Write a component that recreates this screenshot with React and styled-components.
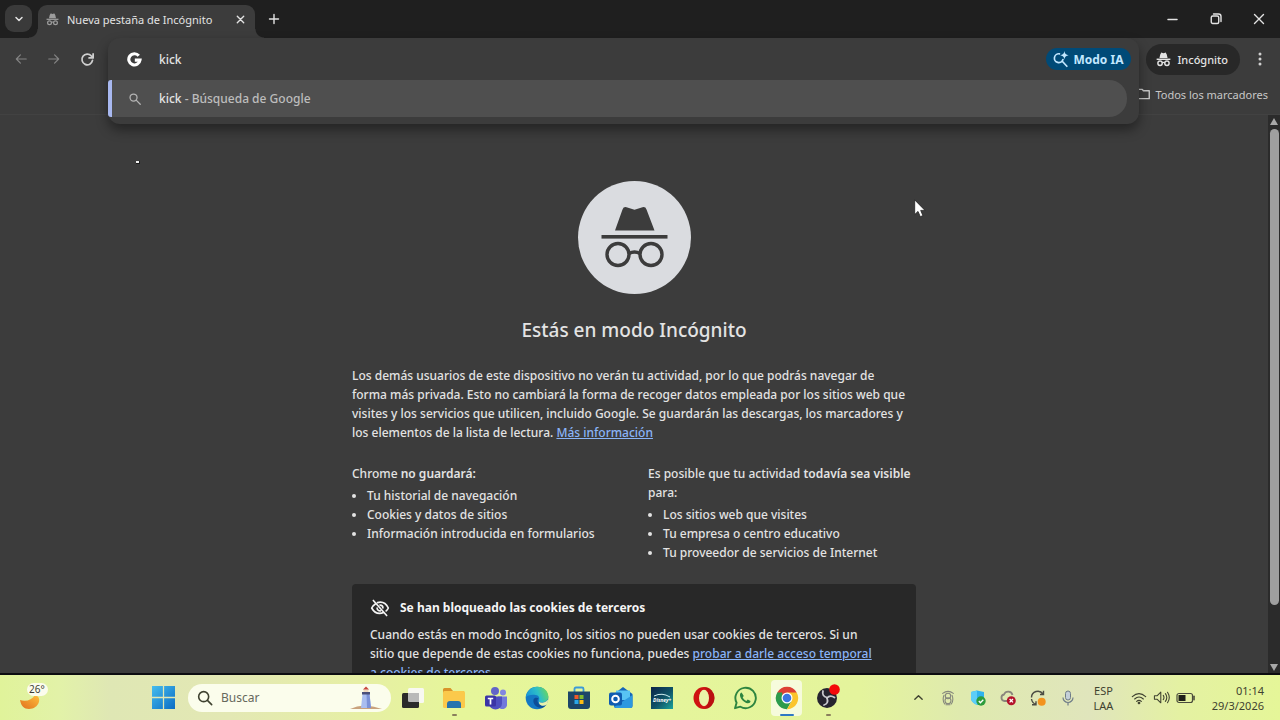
import React from "react";
import styled, { createGlobalStyle } from "styled-components";

const GlobalStyle = createGlobalStyle`
  *, *::before, *::after { box-sizing: border-box; }
  body {
    margin: 0;
    background: #3c3c3c;
    color: #e3e3e3;
    font-family: "Noto Sans", "Open Sans", sans-serif;
    font-size: 12px;
    font-weight: 500;
  }
  button, input {
    font: inherit;
    color: inherit;
    background: none;
    border: 0;
    padding: 0;
    outline: 0;
  }
  button { display: flex; align-items: center; justify-content: center; }
  h1, h2, p, ul { margin: 0; }
  strong { font-weight: 600; }
  svg { display: block; flex: none; }
`;

const Screen = styled.div`
  height: 100vh;
  display: flex;
  flex-direction: column;
  overflow: hidden;
`;

/* ---------- tab strip ---------- */

const TabStrip = styled.header`
  display: flex;
  align-items: flex-start;
  height: 38px;
  padding: 5px 0 0 5px;
  background: #1f1f1f;
`;

const TabSearch = styled.button`
  width: 27px;
  height: 27px;
  border-radius: 9px;
  background: #3a3a3a;
`;

const Tab = styled.div`
  position: relative;
  display: flex;
  align-items: center;
  gap: 8px;
  width: 217px;
  height: 33px;
  margin-left: 6px;
  padding: 0 7px 4px 8px;
  border-radius: 9px 9px 0 0;
  background: #3c3c3c;
  font-size: 11px;
  font-weight: 400;

  &::before, &::after {
    content: "";
    position: absolute;
    bottom: 0;
    width: 9px;
    height: 9px;
  }
  &::before { left: -9px; background: radial-gradient(circle at 0 0, #1f1f1f 8px, #3c3c3c 9px); }
  &::after { right: -9px; background: radial-gradient(circle at 100% 0, #1f1f1f 8px, #3c3c3c 9px); }
`;

const TabTitle = styled.span`
  flex: 1;
  white-space: nowrap;
`;

const IconButton = styled.button`
  width: ${(p) => p.$w || 16}px;
  height: ${(p) => p.$h || 16}px;
  color: ${(p) => p.$color || "#e3e3e3"};
`;

const NewTab = styled(IconButton)`
  margin: 1px 0 0 7px;
`;

const WindowControls = styled.div`
  display: flex;
  margin-left: auto;
`;

/* ---------- toolbar ---------- */

const Toolbar = styled.nav`
  display: flex;
  align-items: center;
  height: 42px;
  padding-right: 12px;
`;

const NavButtons = styled.div`
  display: flex;
  width: 108px;
  padding-left: 4px;
`;

const Omnibox = styled.form`
  position: relative;
  flex: 1;
  align-self: stretch;
  z-index: 2;
`;

const Popup = styled.div`
  position: absolute;
  inset: 0 0 auto 0;
  padding-bottom: 7px;
  border-radius: 12px;
  background: #3c3c3c;
  box-shadow: 0 6px 12px rgba(0, 0, 0, 0.4);
`;

const QueryRow = styled.div`
  display: flex;
  align-items: center;
  gap: 17px;
  height: 42px;
  padding: 0 8px 0 19px;
`;

const QueryInput = styled.input`
  flex: 1;
  min-width: 0;
`;

const AiButton = styled.button`
  gap: 4px;
  height: 22px;
  padding: 0 8px 0 6px;
  border-radius: 11px;
  background: #004a77;
  color: #c2e7ff;
  font-weight: 700;
`;

const Suggestion = styled.button`
  width: calc(100% - 12px);
  justify-content: flex-start;
  gap: 17px;
  height: 37px;
  padding-left: 16px;
  border-left: 4px solid #a8b8f0;
  border-radius: 3px 18px 18px 3px;
  background: #4f4f4f;
`;

const Muted = styled.span`
  color: #bdbdbd;
`;

const IncognitoChip = styled.button`
  gap: 6px;
  height: 31px;
  margin-left: 7px;
  padding: 0 12px 0 10px;
  border-radius: 16px;
  background: #282828;
  font-size: 11px;
`;

const MenuButton = styled(IconButton)`
  margin-left: 12px;
`;

const BookmarksBar = styled.div`
  display: flex;
  justify-content: flex-end;
  height: 35px;
  padding: 4px 12px 0 0;
  border-bottom: 1px solid #424242;
`;

const BookmarksButton = styled.button`
  gap: 4px;
  height: 20px;
  font-size: 11px;
  font-weight: 400;
  color: #c7c7c7;
`;

/* ---------- page ---------- */

const Viewport = styled.div`
  flex: 1;
  min-height: 0;
  display: flex;
  border-bottom: 2px solid #0c0c10;
`;

const Page = styled.main`
  position: relative;
  flex: 1;
  overflow: hidden;
  padding-top: 66px;
`;

const Article = styled.article`
  display: flex;
  flex-direction: column;
  width: 564px;
  margin: 0 auto;
  line-height: 19px;
`;

const Badge = styled.div`
  align-self: center;
  width: 113px;
  height: 113px;
  border-radius: 50%;
  background: #dadce0;
`;

const Title = styled.h1`
  margin: 23px 0 22px;
  font-size: 19px;
  line-height: 27px;
  font-weight: 500;
  text-align: center;
`;

const Link = styled.a`
  color: #8ab4f8;
  text-decoration: underline;
`;

const Columns = styled.div`
  display: grid;
  grid-template-columns: 1fr 1fr;
  column-gap: 28px;
  margin-top: 22px;
`;

const List = styled.ul`
  margin-top: 3px;
  padding-left: 15px;
`;

const CookieCard = styled.section`
  margin-top: 22px;
  padding: 14px 38px 14px 18px;
  border-radius: 4px;
  background: #282828;
`;

const CardTitle = styled.h2`
  display: flex;
  align-items: center;
  gap: 10px;
  margin-bottom: 7px;
  font-size: 12px;
  line-height: 20px;
  font-weight: 700;
  color: #f5f5f5;
`;

const Scrollbar = styled.div`
  display: flex;
  flex-direction: column;
  align-items: center;
  justify-content: space-between;
  width: 12px;
  padding: 3px 0 2px;
  background: #2b2b2b;
`;

const Thumb = styled.div`
  flex: 1;
  width: 9px;
  margin: 4px 0 59px;
  border-radius: 5px;
  background: #9f9f9f;
`;

const Pointer = styled.svg`
  position: absolute;
  left: 914px;
  top: 84px;
`;

const Speck = styled.div`
  position: absolute;
  left: 136px;
  top: 46px;
  width: 4px;
  height: 3px;
  background: #f0f0f0;
  border: solid #1c1c1c;
  border-width: 0 1px 1px 0;
`;

/* ---------- taskbar ---------- */

const Taskbar = styled.footer`
  display: flex;
  align-items: center;
  height: 45px;
  padding: 0 16px 0 17px;
  background: linear-gradient(90deg, #e0f39a 0, #e2f2a8 60px, #dfe7b4 110px, #e3e8b4 230px, #e6efa4 360px, #e6f69a 460px, #e4f49c 860px, #dfeaae 960px, #e0e5bc 1090px, #e4f1a2 1180px, #e5f698 1280px);
  color: #3f4230;
  font-size: 11px;
  font-weight: 400;
`;

const Weather = styled.button`
  width: 36px;
  height: 36px;
`;

const StartButton = styled.button`
  width: 40px;
  height: 40px;
  margin: 0 5px 0 90px;
`;

const SearchBox = styled.label`
  display: flex;
  align-items: center;
  gap: 8px;
  width: 203px;
  height: 28px;
  padding: 0 8px 0 9px;
  border-radius: 14px;
  background: #fbfdec;
  font-size: 12px;
`;

const SearchInput = styled.input`
  flex: 1;
  min-width: 0;
  &::placeholder { color: #66685c; opacity: 1; }
`;

const Apps = styled.div`
  display: flex;
  width: 457px;
  margin-left: 1px;
`;

const AppButton = styled.button`
  position: relative;
  flex: 1;
  height: 36px;

  &::before {
    content: "";
    position: absolute;
    inset: 0 5px;
    border-radius: 4px;
    background: ${(p) => (p.$active ? "#f6fbdc" : "transparent")};
  }
  &::after {
    content: "";
    position: absolute;
    bottom: 0;
    width: ${(p) => (p.$active ? 14 : 5)}px;
    height: 2px;
    border-radius: 1px;
    background: ${(p) => (p.$active ? "#2f78c4" : p.$open ? "#8a7f5c" : "transparent")};
  }
  svg { position: relative; }
`;

const Tray = styled.div`
  display: flex;
  align-items: center;
  margin-left: auto;
`;

const TrayButton = styled.button`
  width: 30px;
  height: 36px;
`;

const Language = styled.button`
  width: 41px;
  line-height: 15px;
  white-space: pre-line;
`;

const Status = styled.button`
  gap: 6px;
  height: 36px;
  margin-left: 7px;
`;

const Clock = styled.button`
  display: block;
  width: 68px;
  line-height: 15px;
  text-align: right;
  white-space: pre-line;
`;

/* ---------- drawings ---------- */

const Stroke = ({ size = 16, w = 2, box = 24, children }) => (
  <svg width={size} height={size} viewBox={`0 0 ${box} ${box}`} fill="none" stroke="currentColor" strokeWidth={w} strokeLinecap="round" strokeLinejoin="round" aria-hidden="true">
    {children}
  </svg>
);

const MiniIncognito = ({ size = 14, color = "#e3e3e3" }) => (
  <svg width={size} height={size} viewBox="0 0 24 24" fill={color} aria-hidden="true">
    <path d="M17.1 3.6 15.8 1.5c-.3-.5-.8-.7-1.3-.5L12 1.8 9.500 1c-.5-.2-1 0-1.300.5L6.900 3.600 5.500 9.500h13z" />
    <path d="M1 10.500h22v2.300H1z" />
    <circle cx="6.500" cy="18" r="3.500" fill="none" stroke={color} strokeWidth="2.300" />
    <circle cx="17.500" cy="18" r="3.500" fill="none" stroke={color} strokeWidth="2.300" />
    <path d="M9.500 17.500q2.500-1.800 5 0" fill="none" stroke={color} strokeWidth="2" />
  </svg>
);

const IncognitoMark = () => (
  <svg width="113" height="113" viewBox="0 0 113 113" aria-hidden="true">
    <path d="M37 49.500 44.500 28.500Q45.500 25.500 48.500 26.200L56.500 28.800 64.500 26.200Q67.500 25.500 68.500 28.500L76.500 49.500Z" fill="#3c3c3c" />
    <rect x="23.500" y="54" width="66" height="3.600" fill="#3c3c3c" />
    <g fill="none" stroke="#3c3c3c" strokeWidth="3.400">
      <circle cx="40" cy="73.500" r="11" />
      <circle cx="73" cy="73.500" r="11" />
      <path d="M51 72.500q5.500-3 11 0" />
    </g>
  </svg>
);

const GoogleG = () => (
  <svg width="15" height="15" viewBox="0 0 24 24" aria-hidden="true">
    <path d="M18.800 6A9 9 0 1 0 20.800 13H12.500" fill="none" stroke="#fff" strokeWidth="5" />
  </svg>
);

const AiSearch = () => (
  <Stroke size={17} w={2.4}>
    <path d="M10.500 4A6.200 6.200 0 1 0 15.500 12M14.500 14.500l6.500 7" />
    <path d="M17.500 0q.6 5.400 6 6-5.400.6-6 6-.6-5.400-6-6 5.400-.6 6-6z" fill="currentColor" stroke="none" />
  </Stroke>
);

const WeatherIcon = () => (
  <svg width="36" height="36" viewBox="0 0 36 36" aria-hidden="true">
    <defs>
      <linearGradient id="moon" x1="0" y1="1" x2="1" y2="0">
        <stop offset="0" stopColor="#e0701c" />
        <stop offset="1" stopColor="#ffbf3c" />
      </linearGradient>
    </defs>
    <path d="M3 20c6 2 12 0 15-5 8 2 4 14-6 14-5 0-8-3-9-9z" fill="url(#moon)" />
    <rect x="10" y="3" width="21" height="13" rx="6.500" fill="#fbfcee" />
    <text x="12" y="13" fontSize="10" fill="#3c3c34">26°</text>
  </svg>
);

const Windows = () => (
  <svg width="23" height="23" viewBox="0 0 22 22" aria-hidden="true">
    <defs>
      <linearGradient id="win" x1="0" y1="0" x2="1" y2="1">
        <stop offset="0" stopColor="#45bdee" />
        <stop offset="1" stopColor="#0a6cc4" />
      </linearGradient>
    </defs>
    <path d="M0 0h10.400v10.400H0zM11.600 0H22v10.400H11.600zM0 11.600h10.400V22H0zM11.600 11.600H22V22H11.600z" fill="url(#win)" />
  </svg>
);

const Lighthouse = () => (
  <svg width="34" height="24" viewBox="0 0 34 24" aria-hidden="true">
    <path d="M1 23q8-4 16-3.500T33 23z" fill="#c9a27c" />
    <path d="M13.500 8h7l1.500 14H12z" fill="#a9bdf0" />
    <path d="M17.500 8h3l1.500 14h-4z" fill="#7c92d8" />
    <path d="M13 6h8v2.500h-8z" fill="#4a4f7a" />
    <path d="M14.500 3.500h5V6h-5z" fill="#f0d9c0" />
    <path d="M14 3.500 17 .5l3 3z" fill="#c8463c" />
  </svg>
);

const TaskView = () => (
  <svg width="24" height="24" viewBox="0 0 24 24" aria-hidden="true">
    <rect x="7" y="2" width="16" height="15" rx="1.500" fill="#f8f8f2" />
    <rect x="1" y="7" width="17" height="15" rx="1.500" fill="#2b2b2b" />
    <path d="M7 7h11v9H8.500Q7 16 7 14.500z" fill="#b9b9b9" />
  </svg>
);

const Folder = () => (
  <svg width="24" height="24" viewBox="0 0 24 24" aria-hidden="true">
    <path d="M1 3.500Q1 2 2.500 2h6l2.500 3H22v5H1z" fill="#d9932a" />
    <rect x="1" y="5" width="22" height="17" rx="1.500" fill="#fbc94b" />
    <path d="M5 22v-4q0-3 3-3h8q3 0 3 3v4z" fill="#2673ae" />
  </svg>
);

const Teams = () => (
  <svg width="24" height="24" viewBox="0 0 24 24" aria-hidden="true">
    <circle cx="11" cy="5" r="4" fill="#6264c8" />
    <circle cx="19" cy="6.500" r="3" fill="#8186e0" />
    <path d="M14 10.500h9v7a4.500 4.500 0 0 1-9 2z" fill="#7278dc" />
    <path d="M5 10.500h13v7a6.500 6 0 0 1-13 0z" fill="#4e4fc0" />
    <rect x="1" y="9.500" width="11" height="11" rx="1.500" fill="#3b34a6" />
    <path d="M3.800 12.500h5.400M6.500 12.500v6" stroke="#fff" strokeWidth="1.700" />
  </svg>
);

const Edge = () => (
  <svg width="24" height="24" viewBox="0 0 24 24" aria-hidden="true">
    <defs>
      <linearGradient id="edge" x1="0" y1=".6" x2="1" y2=".3">
        <stop offset="0" stopColor="#1793d8" />
        <stop offset=".55" stopColor="#2cbfc8" />
        <stop offset="1" stopColor="#6bd65c" />
      </linearGradient>
    </defs>
    <circle cx="12" cy="12" r="11.300" fill="#1478c4" />
    <path d="M.8 11.500C1.500 5 6.500.8 12.300.8c6.500 0 11 4.500 11 9.700 0 3.800-3 6-6.200 6-2.600 0-3.800-1-3.300-2 .8-1.500.9-5-3.300-5.500C6 8.400 2 9.500.8 11.500z" fill="url(#edge)" />
    <path d="M8.500 13.500c-1 5 3.500 8.500 8 8.300 2-.2 4-1.500 5-3-4 2-8.500.5-9-3.500-.2-1.600.5-2.500 1-3-2-1-4.500-.5-5 1.200z" fill="#0d4e98" />
    <path d="M14 14.500c-.5 1.500 1 2.300 3.500 2.200 2.800-.2 4.700-1.700 5.500-3.200.2 2-.6 4-1.700 5.400-3.500 2-8.300.3-7.300-4.400z" fill="#e8f2ac" />
  </svg>
);

const Store = () => (
  <svg width="24" height="24" viewBox="0 0 24 24" aria-hidden="true">
    <path d="M7.500 6V3q0-1.500 1.500-1.500h6q1.500 0 1.500 1.500v3" fill="none" stroke="#3b9ad8" strokeWidth="1.800" />
    <path d="M1 5.500h22V20q0 3-3 3H4q-3 0-3-3z" fill="#1c4668" />
    <path d="M7.500 9h4v4h-4z" fill="#f05a2a" />
    <path d="M12.500 9h4v4h-4z" fill="#82bc2c" />
    <path d="M7.500 14h4v4h-4z" fill="#2ba8e8" />
    <path d="M12.500 14h4v4h-4z" fill="#fbbd14" />
  </svg>
);

const Outlook = () => (
  <svg width="24" height="24" viewBox="0 0 24 24" aria-hidden="true">
    <path d="M5 8 14 1l9.500 7v12q0 2-2 2H7q-2 0-2-2z" fill="#1566b8" />
    <path d="M7 4.500h14V14H7z" fill="#58c3f4" />
    <path d="M5 21 23.500 9v11q0 2-2 2H7z" fill="#2c98e0" />
    <rect x="0" y="6.500" width="13" height="13" rx="2" fill="#0f5cb0" />
    <circle cx="6.500" cy="13" r="3.300" fill="none" stroke="#fff" strokeWidth="2" />
  </svg>
);

const Disney = () => (
  <svg width="24" height="24" viewBox="0 0 24 24" aria-hidden="true">
    <defs>
      <linearGradient id="disney" x1="0" y1="0" x2="1" y2="1">
        <stop offset="0" stopColor="#0c2448" />
        <stop offset=".55" stopColor="#0f5468" />
        <stop offset="1" stopColor="#1ba49c" />
      </linearGradient>
    </defs>
    <rect x="1" y="1" width="22" height="22" fill="url(#disney)" />
    <path d="M4 10q8-4 16 1" fill="none" stroke="#cfeef0" strokeWidth="1" />
    <text x="3" y="16" fontSize="5" fontWeight="700" fontStyle="italic" fill="#fff">Disney+</text>
  </svg>
);

const Opera = () => (
  <svg width="24" height="24" viewBox="0 0 24 24" aria-hidden="true">
    <ellipse cx="12" cy="12" rx="10.500" ry="11" fill="#cf1212" />
    <path d="M12 1c6 0 10.500 5 10.500 11S18 23 12 23c3-1.500 5-6 5-11s-2-9.500-5-11z" fill="#a50d10" opacity=".5" />
    <ellipse cx="12" cy="12" rx="5" ry="8.300" fill="#eaf3a8" />
  </svg>
);

const WhatsApp = () => (
  <svg width="24" height="24" viewBox="0 0 24 24" fill="none" aria-hidden="true">
    <path d="M2 22.200 3.600 16.700A10.200 10.200 0 1 1 7.400 20.700z" stroke="#2e8540" strokeWidth="1.900" strokeLinejoin="round" />
    <path d="M8.600 6.500c-1.500.5-2 2-1.500 3.700 1 3.400 4 6.300 7.400 7 1.500.3 3-.6 3-2.200l-2.800-1.500-1.300 1.400c-1.700-.7-3-2-3.700-3.600l1.100-1.300z" fill="#2e8540" />
  </svg>
);

const Chrome = () => (
  <svg width="24" height="24" viewBox="0 0 24 24" aria-hidden="true">
    <path d="M12 12 2.300 6.400A11.200 11.200 0 0 1 21.700 6.400z" fill="#dd4035" />
    <path d="M12 12v11.200A11.200 11.200 0 0 1 2.300 6.400z" fill="#2c9b4c" />
    <path d="M7.200 14.800 2.300 6.400l5 .2z" fill="#2c9b4c" />
    <path d="M16.800 14.800 12 23.200 7.200 14.800z" fill="#2c9b4c" />
    <path d="M16.800 14.800 12 23.200h.5A11.200 11.200 0 0 0 21.700 6.400H12z" fill="#fbc42c" />
    <circle cx="12" cy="12" r="5.500" fill="#fff" />
    <circle cx="12" cy="12" r="4.300" fill="#3a76e0" />
  </svg>
);

const Obs = () => (
  <svg width="24" height="28" viewBox="0 0 24 28" aria-hidden="true">
    <circle cx="11" cy="14" r="10" fill="#262430" />
    <g fill="none" stroke="#c9c9cf" strokeWidth="1.800" strokeLinecap="round">
      <path d="M7 7q-1.500 5 4 6.500" />
      <path d="M18.500 13.500q-4.500-3-7.500.5" />
      <path d="M8 21q5-1.500 3-7" />
    </g>
    <circle cx="18.500" cy="5.500" r="5.300" fill="#f40a0a" />
  </svg>
);

const apps = [
  { name: "Vista de tareas", Icon: TaskView },
  { name: "Explorador de archivos", Icon: Folder, open: true },
  { name: "Microsoft Teams", Icon: Teams },
  { name: "Microsoft Edge", Icon: Edge },
  { name: "Microsoft Store", Icon: Store },
  { name: "Outlook", Icon: Outlook },
  { name: "Disney+", Icon: Disney },
  { name: "Opera", Icon: Opera },
  { name: "WhatsApp", Icon: WhatsApp },
  { name: "Google Chrome", Icon: Chrome, active: true },
  { name: "OBS Studio", Icon: Obs, open: true },
];

const Shield = () => (
  <Stroke size={16} w={1.6}>
    <g stroke="#85877c">
      <path d="M4 5q8-6 16 0M6 8q-3 7 1 13M18 8q3 7-1 13M9 22h6" />
      <circle cx="12" cy="9" r="4" />
      <circle cx="12" cy="16" r="4.500" />
    </g>
  </Stroke>
);

const Secure = () => (
  <svg width="16" height="16" viewBox="0 0 16 16" aria-hidden="true">
    <path d="M1 2 7 .5l7 1.500v7q-1 4-6 6-6-2-7-6z" fill="#2fb2ee" />
    <path d="M1 2 7 .5V15Q2 13 1 9z" fill="#5ccdf8" />
    <circle cx="11" cy="11" r="4.700" fill="#2c9c3c" />
    <path d="m8.800 11 1.600 1.700 2.900-3" fill="none" stroke="#fff" strokeWidth="1.300" />
  </svg>
);

const CloudError = () => (
  <svg width="16" height="16" viewBox="0 0 16 16" aria-hidden="true">
    <path d="M8 11H4.500a3.300 3.300 0 0 1-.5-6.500 4.500 4.500 0 0 1 8.500.5" fill="none" stroke="#8a857c" strokeWidth="1.800" />
    <circle cx="11.300" cy="10.700" r="4.500" fill="#b3122a" />
    <path d="m9.600 9 3.400 3.400m0-3.400-3.400 3.400" stroke="#fff" strokeWidth="1.300" />
  </svg>
);

const Sync = () => (
  <svg width="16" height="16" viewBox="0 0 16 16" aria-hidden="true">
    <g fill="none" stroke="#4c4d44" strokeWidth="1.400">
      <path d="M1.500 7.500A6.300 6.300 0 0 1 13 4M13.500.8V4.500H10M1.500 9q.6 4 4.500 5.500M2 14.800l4 0v-3.500" />
    </g>
    <circle cx="11.700" cy="11.700" r="4" fill="#f3931d" />
  </svg>
);

const Mic = () => (
  <svg width="16" height="16" viewBox="0 0 16 16" fill="none" aria-hidden="true">
    <rect x="5.500" y="1" width="5" height="9" rx="2.500" fill="#c4cfd8" stroke="#6f7c88" />
    <path d="M3 7.500a5 5 0 0 0 10 0M8 12.500V15.500" stroke="#6f7c88" strokeWidth="1.200" />
  </svg>
);

const Wifi = () => (
  <Stroke size={16} w={1.7}>
    <path d="M2 10q10-9 20 0M5.500 13.500q6.500-6 13 0M8.500 17q3.500-3 7 0" />
    <circle cx="12" cy="19.500" r="1.200" />
  </Stroke>
);

const Volume = () => (
  <Stroke size={17} w={1.5}>
    <path d="M2 9.500h4l5-5v15l-5-5H2zM14.500 9q2 3 0 6M17.500 6.500q4 5.500 0 11M20.500 4.500q5 7.500 0 15" />
  </Stroke>
);

const Battery = () => (
  <svg width="20" height="12" viewBox="0 0 20 12" aria-hidden="true">
    <rect x="1" y="1.500" width="15.500" height="9" rx="2" fill="none" stroke="#4a4b3c" strokeWidth="1.200" />
    <rect x="2.500" y="3" width="7" height="6" fill="#1f201a" />
    <path d="M18 4.300v3.400" stroke="#4a4b3c" strokeWidth="1.600" strokeLinecap="round" />
  </svg>
);

export default function App() {
  return (
    <Screen>
      <GlobalStyle />
      <TabStrip>
        <TabSearch aria-label="Buscar pestañas">
          <Stroke size={12} w={3}><path d="m6 9 6 6 6-6" /></Stroke>
        </TabSearch>
        <Tab>
          <MiniIncognito size={13} color="#9c9c9c" />
          <TabTitle>Nueva pestaña de Incógnito</TabTitle>
          <IconButton aria-label="Cerrar pestaña">
            <Stroke size={11} w={3}><path d="m5 5 14 14M19 5 5 19" /></Stroke>
          </IconButton>
        </Tab>
        <NewTab $w={24} $h={26} aria-label="Nueva pestaña">
          <Stroke size={12} w={2.8}><path d="M12 3v18M3 12h18" /></Stroke>
        </NewTab>
        <WindowControls>
          <IconButton $w={43} $h={28} aria-label="Minimizar">
            <Stroke size={11} w={2.8}><path d="M2 12h20" /></Stroke>
          </IconButton>
          <IconButton $w={43} $h={28} aria-label="Restaurar">
            <Stroke size={12} w={2.8}>
              <rect x="2.500" y="6" width="15" height="15" rx="3" />
              <path d="M7 2h10q5 0 5 5v10" />
            </Stroke>
          </IconButton>
          <IconButton $w={43} $h={28} aria-label="Cerrar">
            <Stroke size={12} w={2.8}><path d="m3 3 18 18M21 3 3 21" /></Stroke>
          </IconButton>
        </WindowControls>
      </TabStrip>

      <Toolbar>
        <NavButtons>
          <IconButton $w={33} $h={28} $color="#848484" aria-label="Atrás">
            <Stroke size={14}><path d="M21 12H4M11 5l-7 7 7 7" /></Stroke>
          </IconButton>
          <IconButton $w={33} $h={28} $color="#848484" aria-label="Adelante">
            <Stroke size={14}><path d="M3 12h17M13 5l7 7-7 7" /></Stroke>
          </IconButton>
          <IconButton $w={34} $h={28} $color="#cfcfcf" aria-label="Recargar">
            <Stroke size={15} w={2.8}><path d="M20 13.500A8.500 8.500 0 1 1 18 6.300L21 9M21 3v6.500h-6.500" /></Stroke>
          </IconButton>
        </NavButtons>
        <Omnibox role="search">
          <Popup>
            <QueryRow>
              <GoogleG />
              <QueryInput aria-label="Barra de direcciones" defaultValue="kick" />
              <AiButton type="button"><AiSearch />Modo IA</AiButton>
            </QueryRow>
            <Suggestion type="button">
              <Stroke size={14} w={2.2}>
                <g stroke="#b4b4b4"><circle cx="9.500" cy="9.500" r="6" /><path d="m14 14 7 7" /></g>
              </Stroke>
              <span>kick <Muted>- Búsqueda de Google</Muted></span>
            </Suggestion>
          </Popup>
        </Omnibox>
        <IncognitoChip><MiniIncognito size={15} />Incógnito</IncognitoChip>
        <MenuButton aria-label="Menú">
          <svg width="4" height="16" viewBox="0 0 4 16" fill="#d0d0d0" aria-hidden="true">
            <circle cx="2" cy="3" r="1.500" /><circle cx="2" cy="8" r="1.500" /><circle cx="2" cy="13" r="1.500" />
          </svg>
        </MenuButton>
      </Toolbar>
      <BookmarksBar>
        <BookmarksButton>
          <Stroke size={14} w={2.4}><path d="M2 4h7l2 2.500h10V20H2z" /></Stroke>
          Todos los marcadores
        </BookmarksButton>
      </BookmarksBar>

      <Viewport>
        <Page>
          <Article>
            <Badge><IncognitoMark /></Badge>
            <Title>Estás en modo Incógnito</Title>
            <p>
              Los demás usuarios de este dispositivo no verán tu actividad, por lo que podrás navegar de
              <br />
              forma más privada. Esto no cambiará la forma de recoger datos empleada por los sitios web que
              <br />
              visites y los servicios que utilicen, incluido Google. Se guardarán las descargas, los marcadores y
              <br />
              los elementos de la lista de lectura. <Link href="#info">Más información</Link>
            </p>
            <Columns>
              <div>
                <p>Chrome <strong>no guardará:</strong></p>
                <List>
                  <li>Tu historial de navegación</li>
                  <li>Cookies y datos de sitios</li>
                  <li>Información introducida en formularios</li>
                </List>
              </div>
              <div>
                <p>Es posible que tu actividad <strong>todavía sea visible</strong> para:</p>
                <List>
                  <li>Los sitios web que visites</li>
                  <li>Tu empresa o centro educativo</li>
                  <li>Tu proveedor de servicios de Internet</li>
                </List>
              </div>
            </Columns>
            <CookieCard>
              <CardTitle>
                <Stroke size={20} w={2}>
                  <path d="M9 5.500Q17.500 3 22 12q-1 2-2.600 3.500M6 7.500Q3.500 9 2 12q5 9 14.500 5.500M4 3l16 18" />
                  <path d="M12 8.500a3.500 3.500 0 0 1 3.500 3.500M8.500 12a3.500 3.500 0 0 0 4 3.500" />
                </Stroke>
                Se han bloqueado las cookies de terceros
              </CardTitle>
              <p>
                Cuando estás en modo Incógnito, los sitios no pueden usar cookies de terceros. Si un
                sitio que depende de estas cookies no funciona, puedes{" "}
                <Link href="#cookies">probar a darle acceso temporal a cookies de terceros</Link>
              </p>
            </CookieCard>
          </Article>
          <Speck />
          <Pointer width="12" height="19" viewBox="0 0 12 19" aria-hidden="true">
            <path d="M.7.900V15.500L4 12.400 6.300 17.700 8.900 16.600 6.700 11.400H11z" fill="#fff" stroke="#222" strokeWidth=".8" />
          </Pointer>
        </Page>
        <Scrollbar>
          <svg width="8" height="7" viewBox="0 0 8 7" fill="#a8a8a8" aria-hidden="true"><path d="M4 0 8 7H0z" /></svg>
          <Thumb />
          <svg width="8" height="7" viewBox="0 0 8 7" fill="#a8a8a8" aria-hidden="true"><path d="M4 7 0 0h8z" /></svg>
        </Scrollbar>
      </Viewport>

      <Taskbar>
        <Weather aria-label="Tiempo"><WeatherIcon /></Weather>
        <StartButton aria-label="Inicio"><Windows /></StartButton>
        <SearchBox>
          <Stroke size={16} w={2.4}><circle cx="10" cy="10" r="7.500" /><path d="m16 16 6 6" /></Stroke>
          <SearchInput placeholder="Buscar" aria-label="Buscar" />
          <Lighthouse />
        </SearchBox>
        <Apps>
          {apps.map(({ name, Icon, open, active }) => (
            <AppButton key={name} aria-label={name} $open={open} $active={active}><Icon /></AppButton>
          ))}
        </Apps>
        <Tray>
          <TrayButton aria-label="Mostrar iconos ocultos"><Stroke size={11} w={3}><path d="m4 16 8-8 8 8" /></Stroke></TrayButton>
          <TrayButton aria-label="Protección"><Shield /></TrayButton>
          <TrayButton aria-label="Seguridad"><Secure /></TrayButton>
          <TrayButton aria-label="OneDrive"><CloudError /></TrayButton>
          <TrayButton aria-label="Actualizaciones"><Sync /></TrayButton>
          <TrayButton aria-label="Micrófono"><Mic /></TrayButton>
          <Language>{"ESP\nLAA"}</Language>
          <Status aria-label="Red, volumen y batería"><Wifi /><Volume /><Battery /></Status>
          <Clock>{"01:14\n29/3/2026"}</Clock>
        </Tray>
      </Taskbar>
    </Screen>
  );
}
